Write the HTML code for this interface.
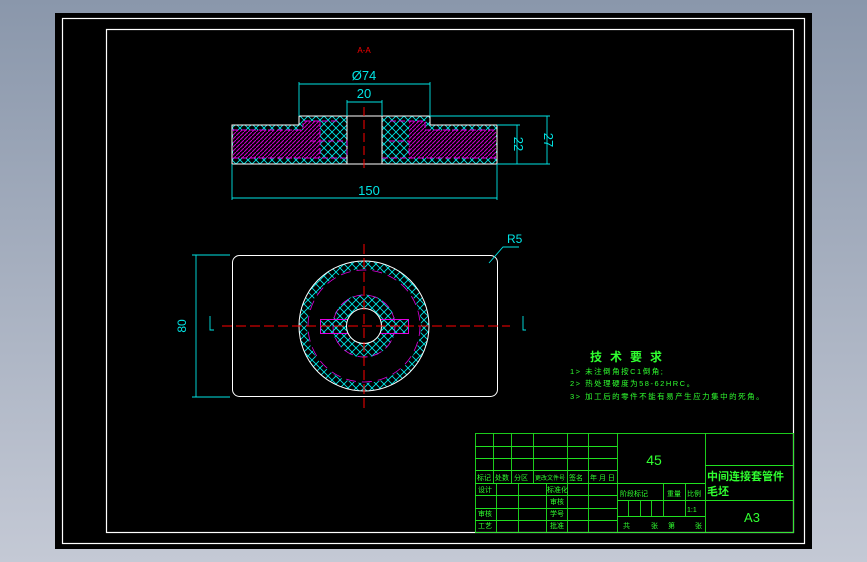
<!DOCTYPE html>
<html><head><meta charset="utf-8"><style>
html,body{margin:0;padding:0;width:867px;height:562px;overflow:hidden;background:linear-gradient(#8a97ab,#c4c9d5);}
svg{position:absolute;left:0;top:0}
text{font-family:"Liberation Sans","Noto Sans CJK SC",sans-serif}
</style></head><body>
<svg width="867" height="562" viewBox="0 0 867 562" xmlns="http://www.w3.org/2000/svg">
<defs>
<pattern id="cx" width="8" height="8" patternUnits="userSpaceOnUse">
<path d="M0 0L8 8M8 0L0 8" stroke="#00e5e5" stroke-width="0.9"/>
</pattern>
<pattern id="mg" width="4" height="4" patternUnits="userSpaceOnUse">
<path d="M-1 5L5 -1" stroke="#c800c8" stroke-width="1.1"/>
</pattern>
</defs>
<rect x="55" y="13" width="757" height="536" fill="#000"/>
<rect x="62.5" y="18.5" width="742" height="525" fill="none" stroke="#fff" stroke-width="1.2"/>
<rect x="106.5" y="29.5" width="687" height="503" fill="none" stroke="#fff" stroke-width="1.2"/>

<!-- Section A-A -->
<text x="364" y="53" fill="#f00" font-size="8" text-anchor="middle">A-A</text>
<path d="M232 125H299V116H347V164H232Z" fill="url(#cx)"/>
<path d="M382 116H430V125H497V164H382Z" fill="url(#cx)"/>
<path d="M233 130H303V121H320V158H233Z" fill="#000"/>
<path d="M233 130H303V121H320V158H233Z" fill="url(#mg)"/>
<path d="M409 121H426V130H496V158H409Z" fill="#000"/>
<path d="M409 121H426V130H496V158H409Z" fill="url(#mg)"/>
<path d="M232 125H299V116H430V125H497V164H232Z" fill="none" stroke="#fff" stroke-width="1"/>
<path d="M347 116V164M382 116V164" stroke="#fff"/>
<path d="M232 130H303V121H340M320 121V158M310 141H347V158M232 158H347M382 158H497M425 130H497M390 121H425V130M389 141H409V158" stroke="#e000e0" fill="none" stroke-dasharray="6 3" stroke-width="0.9"/>
<path d="M364 107V170" stroke="#f00" stroke-dasharray="9 4" stroke-width="1"/>
<g stroke="#00e5e5" fill="none" stroke-width="0.9">
<path d="M299 82V116M430 82V116M299 84H430"/>
<path d="M347 100V116M382 100V116M347 102H382"/>
<path d="M232 164V200M497 164V200M232 198H497"/>
<path d="M497 125H520M430 116H550M497 164H550M517 125V164M547 116V164"/>
</g>
<g fill="#00e5e5" font-size="13">
<text x="364" y="80" text-anchor="middle">Ø74</text>
<text x="364" y="98" text-anchor="middle">20</text>
<text x="369" y="195" text-anchor="middle">150</text>
<text transform="translate(514,144) rotate(90)" text-anchor="middle">22</text>
<text transform="translate(544,140) rotate(90)" text-anchor="middle">27</text>
</g>

<!-- Plan view -->
<rect x="232.5" y="255.5" width="265" height="141" rx="7" fill="none" stroke="#fff" stroke-width="1"/>
<circle cx="364" cy="326" r="61" fill="none" stroke="url(#cx)" stroke-width="8"/>
<circle cx="364" cy="326" r="65" fill="none" stroke="#fff" stroke-width="1"/>
<circle cx="364" cy="326" r="56" fill="none" stroke="#e000e0" stroke-width="0.8" stroke-dasharray="10 6"/>
<circle cx="364" cy="326" r="24.5" fill="none" stroke="url(#cx)" stroke-width="14"/>
<circle cx="364" cy="326" r="31" fill="none" stroke="#e000e0" stroke-width="0.8" stroke-dasharray="10 5"/>
<rect x="320.5" y="319.5" width="88" height="14" fill="url(#cx)" stroke="#e000e0"/>
<circle cx="364" cy="326" r="17.5" fill="#000" stroke="#fff" stroke-width="1"/>
<path d="M364 244V408M222 326H510" stroke="#f00" stroke-dasharray="10 4" stroke-width="1"/>
<g stroke="#00e5e5" fill="none" stroke-width="0.9">
<path d="M196 255V397M192 255H230M192 397H230"/>
<path d="M489 263L503 247H519"/>
<path d="M210 316V330H214M523 316V330H526"/>
</g>
<text transform="translate(186,326) rotate(-90)" fill="#00e5e5" font-size="12" text-anchor="middle">80</text>
<text x="507" y="243" fill="#00e5e5" font-size="12">R5</text>

<!-- Tech notes -->
<g fill="#30ff30" font-size="12" font-family="'Noto Sans CJK SC',sans-serif">
<text x="590" y="361" letter-spacing="8" font-weight="bold">技术要求</text>
<g font-size="7.5" letter-spacing="1.5">
<text x="570" y="374">1&gt; 未注倒角按C1倒角;</text>
<text x="570" y="386">2&gt; 热处理硬度为58-62HRC。</text>
<text x="570" y="399">3&gt; 加工后的零件不能有易产生应力集中的死角。</text>
</g>
</g>

<!-- Title block -->
<g stroke="#20e020" stroke-width="0.9" fill="none">
<rect x="475.5" y="433.5" width="318" height="99"/>
<path d="M475 446.5H617M475 458.5H617M475 470.5H617M475 483.5H705M475 495.5H617M475 508.5H617M475 520.5H617"/>
<path d="M493.5 433V483M511.5 433V483M533.5 433V483M567.5 433V532M588.5 433V532M617.5 433V532M705.5 433V532"/>
<path d="M496.5 483V532M518.5 483V532M546.5 483V532"/>
<path d="M705 465.5H793M705 500.5H793M617 500.5H705M617 516.5H705"/>
<path d="M628.5 500V516M640.5 500V516M651.5 500V516M663.5 483V516M685.5 483V516"/>
</g>
<g fill="#30ff30" font-family="'Noto Sans CJK SC',sans-serif" font-size="7">
<text x="477" y="480">标记</text><text x="495" y="480">处数</text><text x="514" y="480">分区</text>
<text x="535" y="480" font-size="6">更改文件号</text><text x="569" y="480">签名</text><text x="590" y="480">年 月 日</text>
<text x="478" y="492">设计</text><text x="547" y="492">标准化</text>
<text x="550" y="504">审核</text>
<text x="478" y="516">审核</text><text x="550" y="516">学号</text>
<text x="478" y="528">工艺</text><text x="550" y="528">批准</text>
<text x="620" y="496">阶段标记</text><text x="667" y="496">重量</text><text x="687" y="496">比例</text>
<text x="687" y="512">1:1</text>
<text x="623" y="528">共</text><text x="651" y="528">张</text><text x="668" y="528">第</text><text x="695" y="528">张</text>
<text x="707" y="480" font-size="11" font-weight="bold">中间连接套管件</text>
<text x="707" y="495" font-size="11" font-weight="bold">毛坯</text>
</g>
<text x="654" y="465" fill="#30ff30" font-size="14" text-anchor="middle" font-family="'Liberation Serif',serif">45</text>
<text x="752" y="522" fill="#30ff30" font-size="13" text-anchor="middle" font-family="'Liberation Serif',serif">A3</text>
</svg>
</body></html>
